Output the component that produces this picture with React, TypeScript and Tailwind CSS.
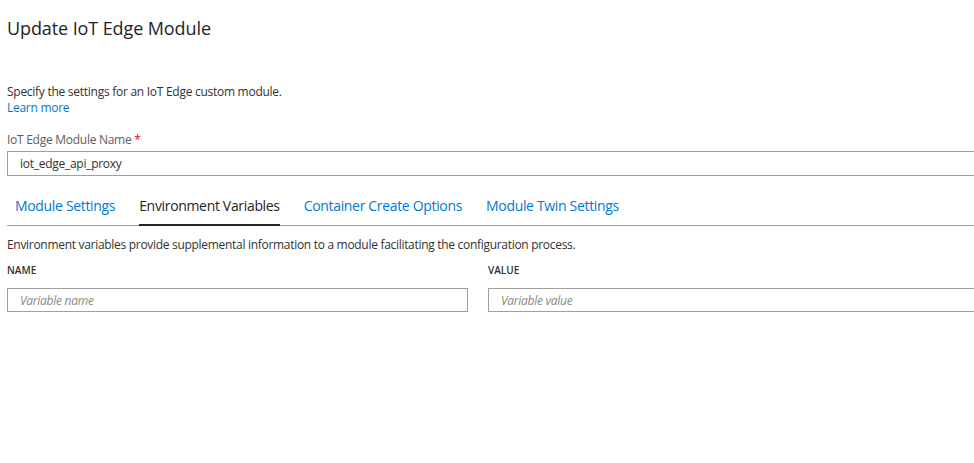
export default function App() {
  return (
    <div className="min-h-[463px] w-[974px] overflow-hidden bg-white font-['Segoe_UI','Open_Sans',sans-serif] text-[#323130]">
      <div className="pl-[7px]">
        <h1 className="pt-[16px] text-[18px] leading-[24px] font-normal tracking-[-0.1px] text-[#252423]">Update IoT Edge Module</h1>

        <p className="mt-[44px] text-[12px] leading-[16px] tracking-[-0.27px] text-[#323130]">
          Specify the settings for an IoT Edge custom module.
        </p>
        <a href="#" className="block text-[12px] leading-[16px] tracking-[-0.27px] text-[#0078d4]">Learn more</a>

        <label className="mt-[16px] block text-[12px] leading-[16px] tracking-[-0.27px] text-[#605e5c]">
          IoT Edge Module Name <span className="text-[#e00b1c]">*</span>
        </label>
        <div className="mt-[3px] -mr-[4px] flex h-[25px] items-center border border-[#a19f9d] pl-[12px] text-[12px] tracking-[-0.27px] text-[#323130]">
          iot_edge_api_proxy
        </div>

        <div className="mt-[9px] flex gap-[24px] border-b border-[#a19f9d] pl-[8px]">
          <Tab label="Module Settings" />
          <Tab label="Environment Variables" active />
          <Tab label="Container Create Options" />
          <Tab label="Module Twin Settings" />
        </div>

        <p className="mt-[11px] text-[12px] leading-[16px] tracking-[-0.3px] text-[#323130]">
          Environment variables provide supplemental information to a module facilitating the configuration process.
        </p>

        <div className="mt-[10px] flex gap-[20px]">
          <div className="w-[461px]">
            <div className="text-[10px] leading-[14px] font-semibold text-[#323130]">NAME</div>
            <div className="mt-[11px] flex h-[24px] items-center border border-[#a19f9d] pl-[12px] pt-px text-[12px] italic tracking-[-0.27px] text-[#8a8886]">
              Variable name
            </div>
          </div>
          <div className="flex-1 -mr-[4px]">
            <div className="text-[10px] leading-[14px] font-semibold text-[#323130]">VALUE</div>
            <div className="mt-[11px] flex h-[24px] items-center border border-[#a19f9d] pl-[12px] pt-px text-[12px] italic tracking-[-0.27px] text-[#8a8886]">
              Variable value
            </div>
          </div>
        </div>
      </div>
    </div>
  )
}

function Tab({ label, active }: { label: string; active?: boolean }) {
  return (
    <div className="relative pt-[8px] pb-[8px]">
      <span className={`text-[14px] leading-[20px] tracking-[-0.33px] ${active ? "text-[#252423]" : "text-[#0078d4]"}`}>{label}</span>
      {active && <div className="absolute left-0 right-0 -bottom-px h-[2px] bg-[#252423]" />}
    </div>
  )
}
